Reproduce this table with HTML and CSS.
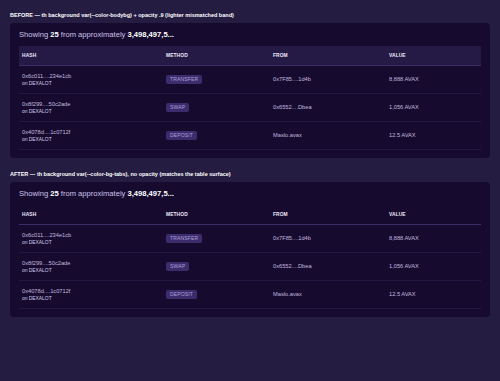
FILE: index.html
```html
<!DOCTYPE html>
<html>
<head>
<meta charset="utf-8">
<link rel="stylesheet" href="styles.css">
</head>
<body>
<section class="demo">
  <h2 class="demo-title">BEFORE — th background var(--color-bodybg) + opacity .9 (lighter mismatched band)</h2>
  <div class="card">
    <p class="summary">Showing <b>25</b> from approximately <b>3,498,497,5...</b></p>
    <table class="tx before">
      <colgroup><col class="c1"><col class="c2"><col class="c3"><col class="c4"></colgroup>
      <thead><tr><th>HASH</th><th>METHOD</th><th>FROM</th><th>VALUE</th></tr></thead>
      <tbody>
        <tr><td><div class="hash">0x6c011....234e1cb</div><div class="sub">on DEXALOT</div></td><td><span class="badge">TRANSFER</span></td><td>0x7F85....1d4b</td><td>8,888 AVAX</td></tr>
        <tr><td><div class="hash">0x8f299....50c2ade</div><div class="sub">on DEXALOT</div></td><td><span class="badge">SWAP</span></td><td>0x6552....Dbea</td><td>1,056 AVAX</td></tr>
        <tr><td><div class="hash">0x4078d....1c0712f</div><div class="sub">on DEXALOT</div></td><td><span class="badge">DEPOSIT</span></td><td>Maslo.avax</td><td>12.5 AVAX</td></tr>
      </tbody>
    </table>
  </div>
</section>
<section class="demo">
  <h2 class="demo-title">AFTER — th background var(--color-bg-tabs), no opacity (matches the table surface)</h2>
  <div class="card">
    <p class="summary">Showing <b>25</b> from approximately <b>3,498,497,5...</b></p>
    <table class="tx after">
      <colgroup><col class="c1"><col class="c2"><col class="c3"><col class="c4"></colgroup>
      <thead><tr><th>HASH</th><th>METHOD</th><th>FROM</th><th>VALUE</th></tr></thead>
      <tbody>
        <tr><td><div class="hash">0x6c011....234e1cb</div><div class="sub">on DEXALOT</div></td><td><span class="badge">TRANSFER</span></td><td>0x7F85....1d4b</td><td>8,888 AVAX</td></tr>
        <tr><td><div class="hash">0x8f299....50c2ade</div><div class="sub">on DEXALOT</div></td><td><span class="badge">SWAP</span></td><td>0x6552....Dbea</td><td>1,056 AVAX</td></tr>
        <tr><td><div class="hash">0x4078d....1c0712f</div><div class="sub">on DEXALOT</div></td><td><span class="badge">DEPOSIT</span></td><td>Maslo.avax</td><td>12.5 AVAX</td></tr>
      </tbody>
    </table>
  </div>
</section>
</body>
</html>
```
FILE: styles.css
```css
html, body {
  margin: 0;
  padding: 0;
  background: #251c41;
}
body {
  padding: 12px 10px 0 10px;
  font-family: "Liberation Sans", Arial, sans-serif;
  color: #c2b9df;
}
.demo + .demo {
  margin-top: 13px;
}
.demo-title {
  margin: 0 0 4px 0;
  font-size: 5.5px;
  line-height: 7px;
  font-weight: bold;
  color: #ffffff;
}
.card {
  background: #160b2f;
  border-radius: 4px;
  padding: 6px 9px 8px 9px;
}
.summary {
  margin: 0 0 5px 0;
  font-size: 7.6px;
  line-height: 12px;
  color: #cbc2e8;
}
.summary b {
  color: #ffffff;
}
.tx {
  width: 100%;
  border-collapse: collapse;
  table-layout: fixed;
}
.c1 { width: 144px; }
.c2 { width: 107px; }
.c3 { width: 116px; }
.c4 { width: 95px; }
.tx th {
  height: 19px;
  padding: 0 3px;
  text-align: left;
  font-size: 4.9px;
  font-weight: bold;
  color: #eee8fb;
  letter-spacing: 0.1px;
  border-bottom: 1px solid #3a2d68;
}
.tx.before th {
  background: #241a45;
}
.tx.after th {
  background: #160b2f;
}
.tx td {
  height: 27px;
  padding: 0 3px;
  vertical-align: middle;
  font-size: 5.7px;
  line-height: 7px;
  color: #c2b9df;
  border-bottom: 1px solid #221942;
}
.sub {
  font-size: 4.9px;
  line-height: 7px;
  color: #d2cbec;
}
.badge {
  display: inline-block;
  padding: 0 4px;
  height: 9px;
  line-height: 9px;
  border-radius: 2px;
  background: #3b2d6b;
  color: #ad9edc;
  font-size: 5.1px;
  letter-spacing: 0.1px;
}
```
